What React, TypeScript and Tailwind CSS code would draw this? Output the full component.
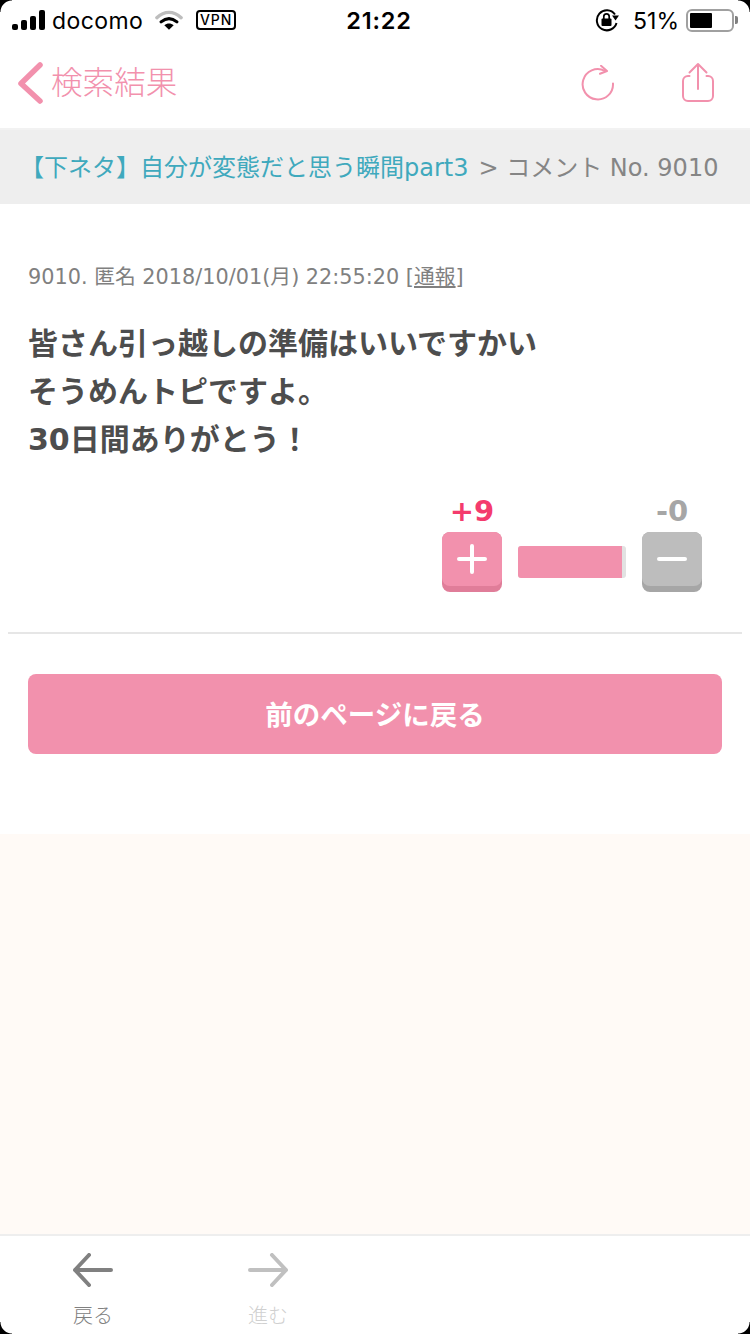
import React from 'react';

const pageFont = "font-['DejaVu_Sans','Noto_Sans_CJK_JP',sans-serif]";
const uiFont = "font-['Noto_Sans_CJK_JP',sans-serif]";

const StatusBar = () => (
  <div className="h-10 flex items-center justify-between pl-3 pr-[12px] bg-white text-black font-['Inter',sans-serif]">
    <div className="flex items-center w-[300px]">
      <div className="flex items-end gap-[3px] h-[20px]">
        <span className="w-[6px] h-[6px] rounded-[2px] bg-black" />
        <span className="w-[6px] h-[10px] rounded-[2px] bg-black" />
        <span className="w-[6px] h-[14px] rounded-[2px] bg-black" />
        <span className="w-[6px] h-[20px] rounded-[2px] bg-black" />
      </div>
      <span className="ml-[7px] mt-[2px] text-[23px] leading-none tracking-[0.4px]">docomo</span>
      <svg width="28" height="22" viewBox="0 0 30 22" className="ml-[12px]">
        <path d="M2 8.5C10 1 20 1 28 8.5" fill="none" stroke="#bdbdbd" strokeWidth="3.6" strokeLinecap="round" />
        <path d="M6.5 13C12 8.5 18 8.5 23.5 13" fill="none" stroke="#000" strokeWidth="3.4" strokeLinecap="round" />
        <path d="M15 21.5L10 16.6C13 14.2 17 14.2 20 16.6Z" fill="#000" />
      </svg>
      <span className="ml-[13px] w-[40px] h-[20px] border-2 border-black rounded-[4px] flex items-center justify-center text-[14px] leading-none tracking-[1px] font-medium">VPN</span>
    </div>
    <span className="absolute left-2 right-0 pt-[2px] text-center text-[23.5px] leading-none font-semibold tracking-[0.8px] pointer-events-none">21:22</span>
    <div className="flex items-center">
      <svg width="24" height="24" viewBox="0 0 24 24">
        <path d="M20 6.5A10 10 0 1 0 21.5 15" fill="none" stroke="#000" strokeWidth="2" />
        <path d="M17 7.5h7l-3.5 5z" fill="#000" />
        <rect x="6.5" y="10.5" width="10" height="7.5" rx="1" fill="#000" />
        <path d="M8.8 11V8.6a2.7 2.7 0 0 1 5.4 0V11" fill="none" stroke="#000" strokeWidth="1.7" />
      </svg>
      <span className="ml-[14px] mt-[2px] text-[23px] leading-none">51%</span>
      <div className="ml-[7px] w-[48px] h-[23px] border-2 border-[#a0a0a0] rounded-[6px] p-[2px] flex">
        <span className="w-[22px] bg-black rounded-[1px]" />
      </div>
      <span className="ml-[1px] w-[3px] h-[8px] bg-[#808080] rounded-r-[2px]" />
    </div>
  </div>
);

const NavBar = () => (
  <div className="h-[88px] flex items-center bg-white pb-[2px]">
    <svg width="28" height="46" viewBox="0 0 28 46" className="ml-[16px]">
      <path d="M24 5L5 23.5L24 41" fill="none" stroke="#f291ad" strokeWidth="5.5" strokeLinecap="round" strokeLinejoin="round" />
    </svg>
    <span className={`ml-[7px] mb-[4px] text-[31.6px] leading-none font-light text-[#f291ad] ${uiFont}`}>検索結果</span>
    <svg width="36" height="36" viewBox="0 0 36 36" className="ml-auto">
      <path d="M24.5 5.6A15.2 15.2 0 1 0 33 18.5" fill="none" stroke="#f291ad" strokeWidth="2" strokeLinecap="round" />
      <path d="M21 0.8L27 6L20 8.8" fill="none" stroke="#f291ad" strokeWidth="2" strokeLinecap="round" strokeLinejoin="round" />
    </svg>
    <svg width="36" height="44" viewBox="0 0 36 44" className="ml-[64px] mr-[34px]">
      <path d="M9.5 15H8a5 5 0 0 0-5 5V35a5 5 0 0 0 5 5H28a5 5 0 0 0 5-5V20a5 5 0 0 0-5-5H26.5" fill="none" stroke="#f291ad" strokeWidth="2" strokeLinecap="round" />
      <path d="M18 28V3M9.5 11.5L18 3L26.5 11.5" fill="none" stroke="#f291ad" strokeWidth="2" strokeLinecap="round" strokeLinejoin="round" />
    </svg>
  </div>
);

const VoteButton = ({ face, lip, children }: { face: string; lip: string; children: React.ReactNode }) => (
  <div className={`w-[60px] h-[60px] rounded-[8px] ${lip}`}>
    <div className={`w-[60px] h-[54px] rounded-[8px] flex items-center justify-center ${face}`}>{children}</div>
  </div>
);

export default function App() {
  return (
    <div className={`relative w-[750px] h-[1334px] overflow-hidden flex flex-col bg-white ${pageFont}`}>
      <StatusBar />
      <NavBar />

      <div className="h-[76px] flex items-center pl-[20px] pt-[2px] bg-[#eeeeee] border-t-2 border-[#f2f2f2] text-[24px] leading-none whitespace-nowrap">
        <span className="text-[#3fa9bd]">【下ネタ】自分が変態だと思う瞬間part3</span>
        <span className="ml-[10px] text-[#858585]">&gt; コメント No. 9010</span>
      </div>

      <div className="h-[630px] px-2 bg-white">
        <div className="h-full flex flex-col px-5 pt-[60px]">
          <p className="text-[20.8px] leading-[26px] text-[#808080] whitespace-nowrap">
            9010. 匿名 2018/10/01(月) 22:55:20 [<span className="underline">通報</span>]
          </p>
          <p className="mt-[30px] text-[30px] leading-[48px] font-bold text-[#4d4d4d]">
            皆さん引っ越しの準備はいいですかい<br />
            そうめんトピですよ。<br />
            30日間ありがとう！
          </p>
          <div className="mt-[33px] self-end flex items-end pr-[20px]">
            <div className="flex flex-col items-center w-[60px]">
              <span className="text-[29px] leading-[28px] font-bold text-[#f43b6d] mb-[7px]">+9</span>
              <VoteButton face="bg-[#f291ad]" lip="bg-[#e07d99]">
                <svg width="30" height="30" viewBox="0 0 30 30">
                  <path d="M15 2V28M2 15H28" stroke="#fff" strokeWidth="4" strokeLinecap="round" />
                </svg>
              </VoteButton>
            </div>
            <div className="w-[108px] h-[32px] mx-4 mb-[14px] rounded-[3px] overflow-hidden flex bg-[#e2e2e2]">
              <span className="w-[104px] bg-[#f291ad]" />
            </div>
            <div className="flex flex-col items-center w-[60px]">
              <span className="text-[29px] leading-[28px] font-bold text-[#a6a6a6] mb-[7px]">-0</span>
              <VoteButton face="bg-[#bdbdbd]" lip="bg-[#a6a6a6]">
                <svg width="30" height="30" viewBox="0 0 30 30">
                  <path d="M2 15H28" stroke="#fff" strokeWidth="4" strokeLinecap="round" />
                </svg>
              </VoteButton>
            </div>
          </div>
          <div className="-mx-5 mt-[40px] h-[2px] bg-[#e6e6e6]" />
          <button className="mt-[40px] h-[80px] pt-[3px] rounded-[8px] bg-[#f291ad] text-white text-[27.5px] font-bold">
            前のページに戻る
          </button>
        </div>
      </div>

      <div className="flex-1 bg-[#fffaf6]" />

      <div className="h-[100px] flex bg-white border-t-2 border-[#eeeeee] pl-[20px]">
        <div className="w-[146px] flex flex-col items-center pt-[16px] text-[#808080]">
          <svg width="40" height="34" viewBox="0 0 40 34" className="mt-[1px]">
            <path d="M38 17H2M16 2L2 17L16 32" fill="none" stroke="#808080" strokeWidth="4" strokeLinecap="round" strokeLinejoin="round" />
          </svg>
          <span className={`mt-[13px] text-[20px] leading-[30px] font-light ${uiFont}`}>戻る</span>
        </div>
        <div className="ml-[29px] w-[146px] flex flex-col items-center pt-[16px] text-[#d0d0d0]">
          <svg width="40" height="34" viewBox="0 0 40 34" className="mt-[1px]">
            <path d="M2 17H38M24 2L38 17L24 32" fill="none" stroke="#c0c0c0" strokeWidth="4" strokeLinecap="round" strokeLinejoin="round" />
          </svg>
          <span className={`mt-[13px] text-[20px] leading-[30px] font-light ${uiFont}`}>進む</span>
        </div>
      </div>

      {/* screen corners */}
      <span className="absolute top-0 left-0 w-3 h-3 bg-[radial-gradient(circle_at_100%_100%,transparent_11px,#000_12px)]" />
      <span className="absolute top-0 right-0 w-3 h-3 bg-[radial-gradient(circle_at_0%_100%,transparent_11px,#000_12px)]" />
      <span className="absolute bottom-0 left-0 w-3 h-3 bg-[radial-gradient(circle_at_100%_0%,transparent_11px,#000_12px)]" />
      <span className="absolute bottom-0 right-0 w-3 h-3 bg-[radial-gradient(circle_at_0%_0%,transparent_11px,#000_12px)]" />
    </div>
  );
}
